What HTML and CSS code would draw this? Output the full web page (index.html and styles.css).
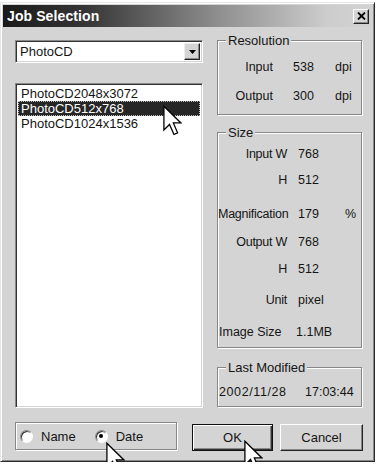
FILE: index.html
```html
<!DOCTYPE html>
<html>
<head>
<meta charset="utf-8">
<title>Job Selection</title>
<link rel="stylesheet" href="styles.css">
</head>
<body>
<div class="win">
  <div class="titlebar">
    <span class="title">Job Selection</span>
    <div class="close">
      <svg width="9" height="8" viewBox="0 0 9 8"><path d="M1 0.5 L8 7.5 M8 0.5 L1 7.5" stroke="#000" stroke-width="1.8"/></svg>
    </div>
  </div>

  <div class="main">
    <div class="left">
      <div class="combo">
        <span class="combo-text">PhotoCD</span>
        <div class="drop">
          <svg width="7" height="4" viewBox="0 0 7 4"><path d="M0 0 H7 L3.5 4 Z" fill="#000"/></svg>
        </div>
      </div>
      <div class="list">
        <div class="item">PhotoCD2048x3072</div>
        <div class="item sel">PhotoCD512x768</div>
        <div class="item">PhotoCD1024x1536</div>
      </div>
    </div>

    <div class="right">
      <fieldset class="grp res">
        <legend>Resolution</legend>
        <div class="row"><span class="lbl">Input</span><span class="val">538</span><span class="unit">dpi</span></div>
        <div class="row"><span class="lbl">Output</span><span class="val">300</span><span class="unit">dpi</span></div>
      </fieldset>

      <fieldset class="grp size">
        <legend>Size</legend>
        <div class="row"><span class="lbl">Input W</span><span class="val">768</span><span class="unit"></span></div>
        <div class="row"><span class="lbl">H</span><span class="val">512</span><span class="unit"></span></div>
        <div class="row"><span class="lbl">Magnification</span><span class="val">179</span><span class="unit">%</span></div>
        <div class="row"><span class="lbl">Output W</span><span class="val">768</span><span class="unit"></span></div>
        <div class="row"><span class="lbl">H</span><span class="val">512</span><span class="unit"></span></div>
        <div class="row"><span class="lbl">Unit</span><span class="val">pixel</span><span class="unit"></span></div>
        <div class="row wide"><span class="lbl-left">Image Size</span><span class="val">1.1MB</span></div>
      </fieldset>

      <fieldset class="grp mod">
        <legend>Last Modified</legend>
        <div class="modrow"><span>2002/11/28</span><span>17:03:44</span></div>
      </fieldset>
    </div>
  </div>

  <div class="bottom">
    <div class="radios">
      <div class="radio"><span class="circle"></span><span>Name</span></div>
      <div class="radio"><span class="circle on"></span><span>Date</span></div>
    </div>
    <div class="btn default"><span>OK</span></div>
    <div class="btn"><span>Cancel</span></div>
  </div>

  <svg class="cursor c1" width="19" height="31" viewBox="0 0 12.5 20"><path d="M0.6 0.6 L0.6 16.2 L4.3 12.6 L7.2 19.2 L9.6 18.1 L6.8 11.6 L11.8 11.6 Z" fill="#fff" stroke="#000" stroke-width="0.85" stroke-linejoin="miter"/></svg>
  <svg class="cursor c2" width="19" height="31" viewBox="0 0 12.5 20"><path d="M0.6 0.6 L0.6 16.2 L4.3 12.6 L7.2 19.2 L9.6 18.1 L6.8 11.6 L11.8 11.6 Z" fill="#fff" stroke="#000" stroke-width="0.85" stroke-linejoin="miter"/></svg>
  <svg class="cursor c3" width="19" height="31" viewBox="0 0 12.5 20"><path d="M0.6 0.6 L0.6 16.2 L4.3 12.6 L7.2 19.2 L9.6 18.1 L6.8 11.6 L11.8 11.6 Z" fill="#fff" stroke="#000" stroke-width="0.85" stroke-linejoin="miter"/></svg>
</div>
</body>
</html>
```

FILE: styles.css
```css
* { box-sizing: border-box; }

html, body {
  margin: 0;
  padding: 0;
  background: #fff;
}

body {
  font-family: "Liberation Sans", Arial, sans-serif;
  font-size: 13px;
  color: #151515;
}

.win {
  position: relative;
  width: 375px;
  height: 460px;
  margin-top: 2px;
  background: #d4d4d4;
  border: 1px solid #e6e6e6;
  border-right-color: #2a2a2a;
  border-bottom-color: #2a2a2a;
  box-shadow: inset 1px 1px 0 #fff, inset -1px -1px 0 #888;
  padding: 2px;
  display: flex;
  flex-direction: column;
}

/* title bar */
.titlebar {
  height: 22px;
  display: flex;
  align-items: center;
  justify-content: space-between;
  padding: 0 3px 0 4px;
  background: linear-gradient(to right, #1a1a1a 0%, #353535 22%, #8e8e8e 58%, #cdcdcd 88%, #d2d2d2 100%);
}

.title {
  color: #fff;
  font-weight: bold;
  font-size: 14px;
  letter-spacing: 0.1px;
}

.close {
  width: 16px;
  height: 15px;
  background: #d4d4d4;
  border: 1px solid #fff;
  border-right-color: #222;
  border-bottom-color: #222;
  box-shadow: inset -1px -1px 0 #888;
  display: flex;
  align-items: center;
  justify-content: center;
}

/* main area */
.main {
  display: grid;
  grid-template-columns: 188px 145px;
  column-gap: 14px;
  padding: 6px 0 0 12px;
  align-items: start;
}

.left {
  display: flex;
  flex-direction: column;
  margin-top: 7px;
}

.combo {
  height: 23px;
  background: #fff;
  border: 1px solid #888;
  border-right-color: #fff;
  border-bottom-color: #fff;
  box-shadow: inset 1px 1px 0 #333, inset -1px -1px 0 #d4d4d4;
  display: flex;
  align-items: center;
  justify-content: space-between;
  padding: 2px 2px 2px 4px;
}

.combo-text { font-size: 13px; }

.drop {
  width: 16px;
  height: 17px;
  background: #d4d4d4;
  border: 1px solid #eee;
  border-right-color: #222;
  border-bottom-color: #222;
  box-shadow: inset -1px -1px 0 #888;
  display: flex;
  align-items: center;
  justify-content: center;
}

.list {
  margin-top: 20px;
  height: 325px;
  background: #fff;
  border: 1px solid #888;
  border-right-color: #fff;
  border-bottom-color: #fff;
  box-shadow: inset 1px 1px 0 #333, inset -1px -1px 0 #d4d4d4;
  padding: 2px 2px 0 2px;
}

.item {
  height: 15px;
  line-height: 15px;
  padding-left: 3px;
  font-size: 13px;
  white-space: nowrap;
}

.item.sel {
  background: #262626;
  color: #fff;
  outline: 1px dotted #bbb;
  outline-offset: -1px;
}

/* group boxes */
.right {
  display: flex;
  flex-direction: column;
}

.grp {
  margin: 0;
  padding: 0;
  min-width: 0;
  border: 1px solid #878787;
  box-shadow: inset 1px 1px 0 #fff, 1px 1px 0 #fff;
}

.grp legend {
  margin-left: 8px;
  padding: 0 2px;
  font-size: 13px;
  line-height: 15px;
  background: #d4d4d4;
}

.res { height: 82px; }
.size { height: 223px; margin-top: 10px; }
.mod { height: 47px; margin-top: 12px; }

.row {
  display: grid;
  height: 20px;
  align-items: center;
  font-size: 12.5px;
  white-space: nowrap;
}

.res .row { grid-template-columns: 55px 62px auto; }
.res .row .val { padding-left: 20px; }
.res .row:first-of-type { margin-top: 9px; }
.res .row + .row { margin-top: 9px; }

.size .row { grid-template-columns: 69px 58px auto; }
.size .row .val { padding-left: 11px; }
.size .row .lbl { letter-spacing: -0.25px; }
.size .row:nth-of-type(1) { margin-top: 4px; }
.size .row:nth-of-type(2) { margin-top: 6px; }
.size .row:nth-of-type(3) { margin-top: 14px; }
.size .row:nth-of-type(4) { margin-top: 8px; }
.size .row:nth-of-type(5) { margin-top: 7px; }
.size .row:nth-of-type(6) { margin-top: 11px; }
.size .row:nth-of-type(7) { margin-top: 12px; }

.size .row.wide { grid-template-columns: 78px auto; }
.size .row.wide .val { padding-left: 0; }

.lbl { text-align: right; }
.lbl-left { padding-left: 1px; }
.val { text-align: left; }
.unit { text-align: left; }

.modrow {
  display: flex;
  height: 20px;
  align-items: center;
  margin-top: 7px;
  padding-left: 1px;
  font-size: 12.5px;
}
.modrow span:first-child { width: 86px; letter-spacing: 0.6px; }

/* bottom row */
.bottom {
  display: flex;
  align-items: flex-start;
  margin-top: 14px;
  padding-left: 12px;
}

.radios {
  width: 162px;
  height: 28px;
  border: 1px solid #878787;
  box-shadow: inset 1px 1px 0 #fff, 1px 1px 0 #fff;
  display: flex;
  align-items: center;
  padding-left: 4px;
  gap: 19px;
}

.radio {
  display: flex;
  align-items: center;
  gap: 8px;
  font-size: 13px;
}

.circle {
  width: 13px;
  height: 13px;
  border-radius: 50%;
  background: #fff;
  border: 1px solid #888;
  border-right-color: #fff;
  border-bottom-color: #fff;
  box-shadow: inset 1px 1px 0 #333;
  display: flex;
  align-items: center;
  justify-content: center;
}

.circle.on::after {
  content: "";
  width: 4px;
  height: 4px;
  border-radius: 50%;
  background: #000;
}

.btn {
  margin-top: 2px;
  height: 27px;
  width: 83px;
  margin-left: 7px;
  background: #d4d4d4;
  border: 1px solid #fff;
  border-right-color: #222;
  border-bottom-color: #222;
  box-shadow: inset -1px -1px 0 #888;
  display: flex;
  align-items: center;
  justify-content: center;
  font-size: 13px;
}

.btn.default {
  width: 81px;
  margin-left: 15px;
  border: 1px solid #111;
  box-shadow: inset 1px 1px 0 #fff, inset -1px -1px 0 #333, inset -2px -2px 0 #888;
}

/* cursors overlaid */
.cursor {
  position: absolute;
}
.c1 { left: 162px; top: 102px; }
.c2 { left: 105px; top: 439px; }
.c3 { left: 243px; top: 437px; }
```
